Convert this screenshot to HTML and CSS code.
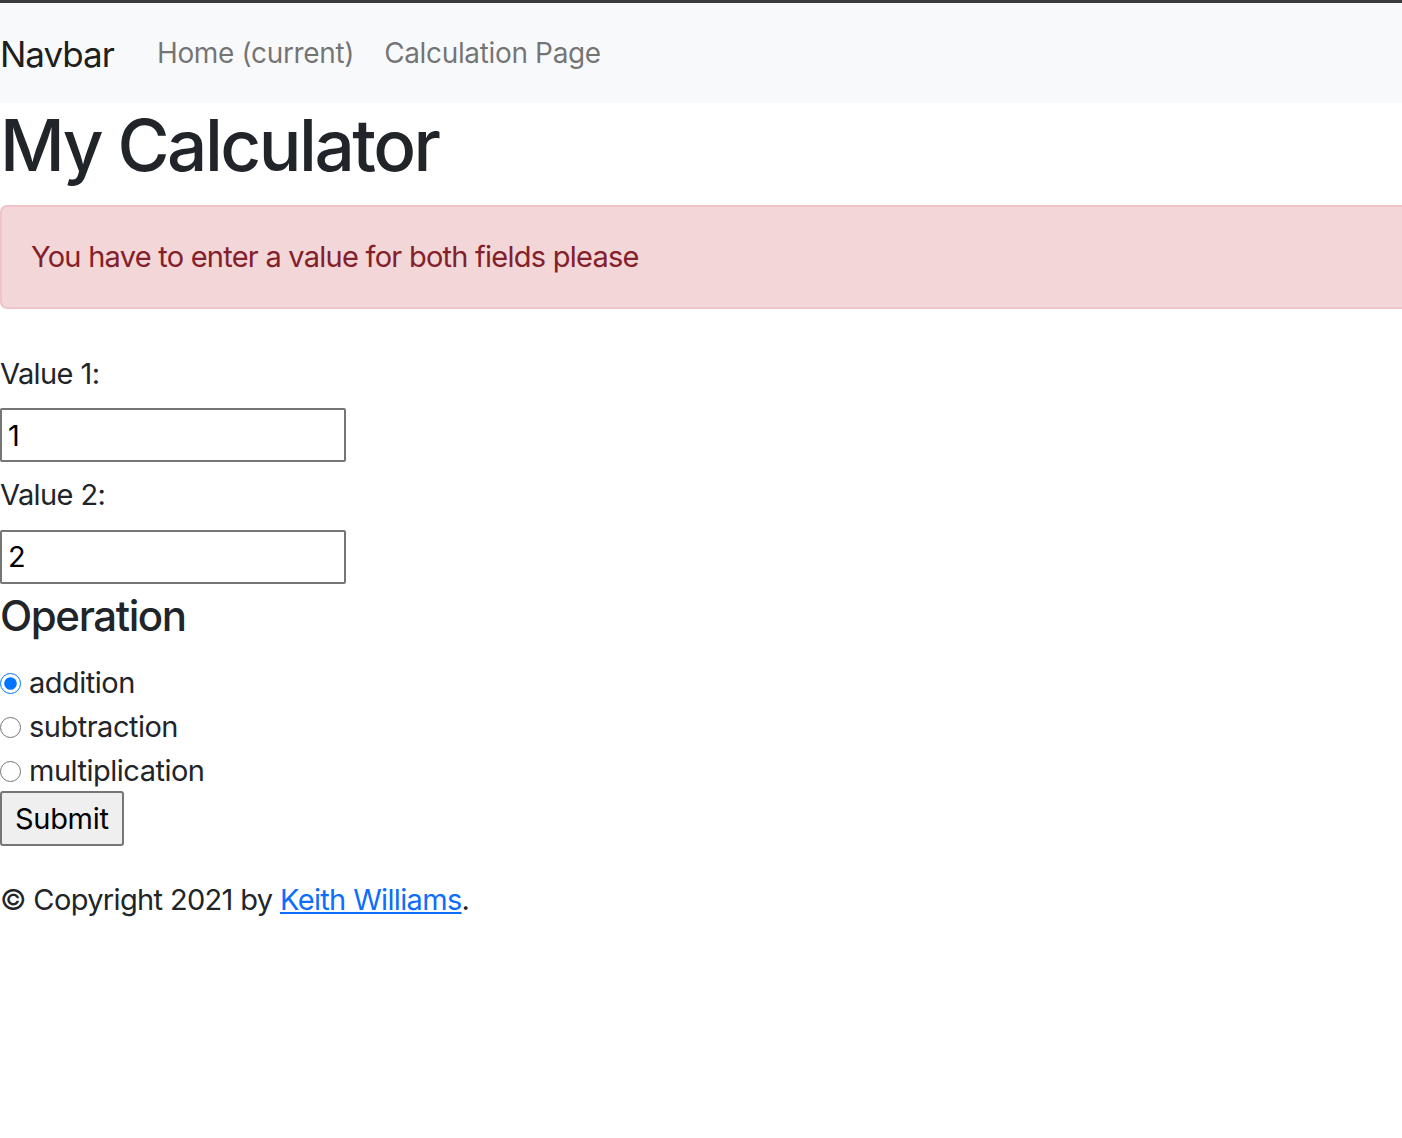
FILE: index.html
```html
<!DOCTYPE html>
<html lang="en">
<head>
<meta charset="utf-8">
<title>My Calculator</title>
<link rel="stylesheet" href="styles.css">
</head>
<body>
<nav class="navbar">
  <a class="brand" href="#">Navbar</a>
  <ul class="nav">
    <li><a class="nav-link" href="#">Home (current)</a></li>
    <li><a class="nav-link" href="#">Calculation Page</a></li>
  </ul>
</nav>
<main class="page">
  <h1 class="title">My Calculator</h1>
  <div class="alert">You have to enter a value for both fields please</div>
  <form class="calc">
    <label class="label" for="v1">Value 1:</label>
    <input class="field" id="v1" type="text" value="1">
    <label class="label" for="v2">Value 2:</label>
    <input class="field" id="v2" type="text" value="2">
    <h4 class="op-title">Operation</h4>
    <div class="radios">
      <label class="radio"><input type="radio" name="op" checked> addition</label>
      <label class="radio"><input type="radio" name="op"> subtraction</label>
      <label class="radio"><input type="radio" name="op"> multiplication</label>
    </div>
    <button class="submit" type="button">Submit</button>
  </form>
  <p class="footer">© Copyright 2021 by <a class="link" href="#">Keith Williams</a>.</p>
</main>
</body>
</html>
```
FILE: styles.css
```css
html, body {
  margin: 0;
  padding: 0;
}
body {
  font-family: Inter, "Noto Sans", sans-serif;
  font-size: 29px;
  line-height: 1.5;
  letter-spacing: -0.6px;
  color: #212529;
  background: #fff;
  overflow-x: hidden;
  border-top: 3px solid #3b3b3d;
}
.navbar {
  display: flex;
  align-items: center;
  height: 100px;
  background: #f8f9fa;
}
.brand {
  font-size: 35px;
  letter-spacing: -1px;
  color: rgba(0, 0, 0, 0.9);
  text-decoration: none;
  margin-right: 43px;
  line-height: 1;
  padding-top: 2px;
}
.nav {
  display: flex;
  list-style: none;
  margin: 0;
  padding: 0;
  gap: 30px;
}
.nav-link {
  color: rgba(0, 0, 0, 0.55);
  text-decoration: none;
  font-size: 28px;
  letter-spacing: -0.35px;
}
.title {
  font-size: 71px;
  font-weight: 500;
  letter-spacing: -2.5px;
  line-height: 1.2;
  margin: 0 0 17px;
}
.alert {
  width: calc(100% + 40px);
  box-sizing: border-box;
  background: #f2d6d8;
  border: 2px solid #efc4c8;
  border-radius: 7px;
  color: #842029;
  padding: 28px 29px;
  margin-bottom: 32px;
  letter-spacing: -0.75px;
}
.calc {
  display: flex;
  flex-direction: column;
  align-items: flex-start;
}
.label {
  display: block;
  margin: 11px 0 13px;
}
.field {
  box-sizing: border-box;
  width: 346px;
  height: 54px;
  font: inherit;
  letter-spacing: 0;
  color: #000;
  border: 2px solid #767676;
  border-radius: 2px;
  padding: 0 6px;
}
.op-title {
  font-size: 42px;
  font-weight: 500;
  letter-spacing: -1.4px;
  line-height: 1.2;
  margin: 7px 0 20px;
}
.radios {
  display: flex;
  flex-direction: column;
}
.radio {
  display: flex;
  align-items: center;
  gap: 8px;
  height: 44px;
  letter-spacing: -0.5px;
}
.radio input {
  width: 21px;
  height: 21px;
  margin: 0;
  accent-color: #0075ff;
}
.submit {
  font: inherit;
  letter-spacing: -0.3px;
  color: #000;
  background: #efefef;
  border: 2px solid #767676;
  border-radius: 3px;
  height: 55px;
  padding: 0 13px;
  margin-top: -2px;
}
.footer {
  margin: 32px 0 0;
  letter-spacing: -0.65px;
}
.link {
  color: #0d6efd;
  text-decoration: underline;
}
```
